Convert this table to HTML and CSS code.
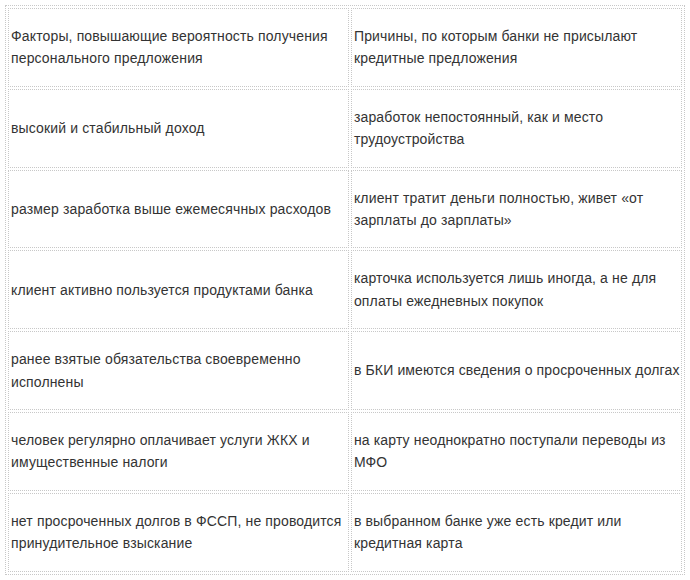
FILE: index.html
```html
<!DOCTYPE html>
<html lang="ru">
<head>
<meta charset="utf-8">
<link rel="stylesheet" href="styles.css">
</head>
<body>
<div class="page">
<table class="cmp">
<tbody>
<tr><td class="c1">Факторы, повышающие вероятность получения персонального предложения</td><td class="c2">Причины, по которым банки не присылают кредитные предложения</td></tr>
<tr><td class="c1">высокий и стабильный доход</td><td class="c2">заработок непостоянный, как и место трудоустройства</td></tr>
<tr><td class="c1">размер заработка выше ежемесячных расходов</td><td class="c2">клиент тратит деньги полностью, живет «от зарплаты до зарплаты»</td></tr>
<tr><td class="c1">клиент активно пользуется продуктами банка</td><td class="c2">карточка используется лишь иногда, а не для оплаты ежедневных покупок</td></tr>
<tr><td class="c1">ранее взятые обязательства своевременно исполнены</td><td class="c2">в БКИ имеются сведения о просроченных долгах</td></tr>
<tr><td class="c1">человек регулярно оплачивает услуги ЖКХ и имущественные налоги</td><td class="c2">на карту неоднократно поступали переводы из МФО</td></tr>
<tr><td class="c1">нет просроченных долгов в ФССП, не проводится принудительное взыскание</td><td class="c2">в выбранном банке уже есть кредит или кредитная карта</td></tr>
</tbody>
</table>
</div>
</body>
</html>
```

FILE: styles.css
```css
html, body {
  margin: 0;
  padding: 0;
  background: #ffffff;
}
.page {
  padding: 5px;
}
.cmp {
  width: 680px;
  border: 1px dotted #c8c8c8;
  border-collapse: separate;
  border-spacing: 2px;
  font-family: "Liberation Sans", Arial, sans-serif;
  font-size: 14px;
  line-height: 22.4px;
  letter-spacing: 0.14px;
  color: #333333;
}
.cmp td {
  border: 1px dotted #c8c8c8;
  padding: 16px 1px 16px 2px;
  vertical-align: middle;
  text-align: left;
}
.c1 {
  width: 338px;
}
.c2 {
  width: 328px;
}
```
